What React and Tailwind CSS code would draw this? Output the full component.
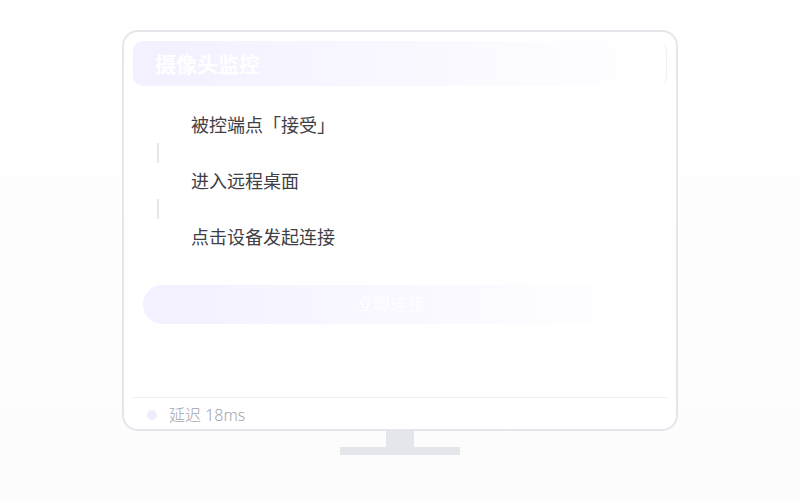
const steps = ["被控端点「接受」", "进入远程桌面", "点击设备发起连接"];

export default function App() {
  return (
    <div
      className="flex h-[500px] w-full flex-col items-center bg-linear-to-b from-white to-[#fcfcfc] pt-[30px]"
      style={{ fontFamily: '"Noto Sans", "Noto Sans CJK SC", sans-serif' }}
    >
      <div className="flex h-[401px] w-[556px] flex-col rounded-[16px] border-2 border-[#e4e6eb] bg-white px-[9px] pt-[9px]">
        <div className="flex h-[45px] shrink-0 items-center rounded-[10px] border-r border-[#f0f0f4] bg-linear-to-r from-[#f3f0ff] to-white pl-[22px] pt-[3px]">
          <span className="text-[21px] font-bold text-white">摄像头监控</span>
        </div>

        <div className="flex flex-1 flex-col">
          <div className="mt-[21px] flex flex-col pl-[13px]">
            {steps.map((s, i) => (
              <div key={s}>
                {i > 0 && (
                  <div className="flex h-[20px] w-[24px] justify-center">
                    <div className="w-[2px] bg-[#e6e7ec]" />
                  </div>
                )}
                <div className="flex h-[36px] items-center">
                  <div className="flex w-[24px] justify-center">
                    <div className="size-[20px] rounded-full bg-white" />
                  </div>
                  <span className="ml-[21px] text-[18px] text-[#404046]">{s}</span>
                </div>
              </div>
            ))}
          </div>

          <button className="ml-[10px] mt-[30px] flex h-[39px] w-[496px] items-center justify-center rounded-full bg-linear-to-r from-[#f3f0ff] to-white">
            <span className="text-[17px] text-white" style={{ fontFamily: '"Liberation Serif", serif' }}>
              立即连接
            </span>
          </button>
        </div>

        <div className="flex h-[32px] shrink-0 items-center gap-[12px] border-t border-[#eeeef2] pl-[14px] pt-[2px]">
          <span className="size-[10px] rounded-full bg-[#efebfd]" />
          <span className="text-[16px] font-light text-[#a3a3ab]">延迟 18ms</span>
        </div>
      </div>
      <div className="h-[16px] w-[28px] bg-[#e3e6ea]" />
      <div className="h-[8px] w-[120px] bg-[#e3e6ea]" />
    </div>
  );
}
